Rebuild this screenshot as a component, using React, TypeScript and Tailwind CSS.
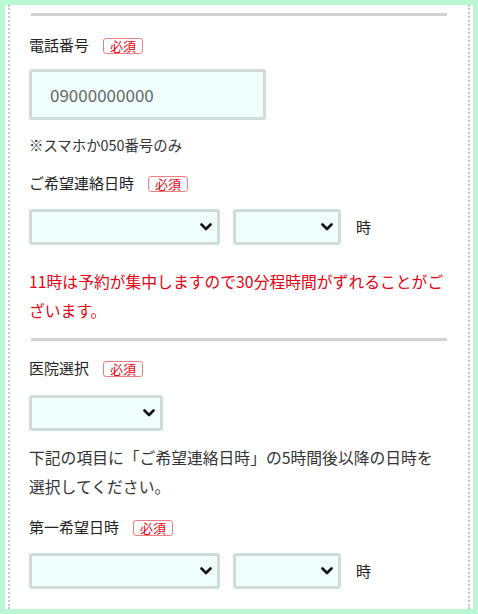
import React from "react";

const font = { fontFamily: '"Noto Sans CJK JP", "Noto Sans", sans-serif' };

function Chevron() {
  return (
    <svg width="12" height="8" viewBox="0 0 12 8" className="block">
      <path d="M1.5 1.5 L6 6 L10.5 1.5" fill="none" stroke="#111" strokeWidth="2.6" strokeLinecap="round" strokeLinejoin="round" />
    </svg>
  );
}

function Select({ w }: { w: string }) {
  return (
    <div className={`${w} h-[36px] flex items-center justify-end pr-[5px] border-[3px] border-[#cfdcd7] bg-[#f0fffb] rounded-[3px]`}>
      <Chevron />
    </div>
  );
}

function Badge() {
  return (
    <span className="inline-flex items-center justify-center h-[16px] px-[6px] border border-[#f08080] rounded-[3px] text-[13px] leading-none text-[#e60012] bg-white">
      必須
    </span>
  );
}

function Label({ text }: { text: string }) {
  return (
    <div className="flex items-center text-[15px] leading-[20px] text-[#222]">
      <span>{text}</span>
      <span className="ml-[14px]">
        <Badge />
      </span>
    </div>
  );
}

function Line() {
  return <div className="h-[3px] bg-[#d2d2d2] mx-[21px]" />;
}

export default function App() {
  return (
    <div className="w-[478px] h-[614px] bg-[#b9f8d3] p-[5px] overflow-hidden" style={font}>
      <div className="h-[604px] bg-white px-[3px] overflow-hidden">
        <div className="h-full border-l-2 border-r-2 border-dotted border-[#c8c8c8] pt-[8px]">
          <Line />
          <div className="px-[19px]">
            <div className="mt-[19px]">
              <Label text="電話番号" />
            </div>
            <div className="mt-[14px] w-[237px] h-[51px] border-[3px] border-[#cfdcd7] bg-[#f0fffb] rounded-[3px] flex items-center pl-[18px] text-[17px] text-[#666]">
              09000000000
            </div>
            <div className="mt-[15px] text-[14.4px] leading-[20px] text-[#333]">※スマホか050番号のみ</div>
            <div className="mt-[18px]">
              <Label text="ご希望連絡日時" />
            </div>
            <div className="mt-[16px] flex items-center">
              <Select w="w-[191px]" />
              <div className="ml-[13px]">
                <Select w="w-[108px]" />
              </div>
              <span className="ml-[15px] text-[15px] text-[#222]">時</span>
            </div>
            <div className="mt-[22px] text-[15.8px] leading-[29px] text-[#e60012] whitespace-nowrap">
              11時は予約が集中しますので30分程時間がずれることがご
              <br />
              ざいます。
            </div>
          </div>
          <div className="mt-[13px]">
            <Line />
          </div>
          <div className="px-[19px]">
            <div className="mt-[17px]">
              <Label text="医院選択" />
            </div>
            <div className="mt-[17px]">
              <Select w="w-[134px]" />
            </div>
            <div className="mt-[12px] text-[15.8px] leading-[29px] text-[#333] whitespace-nowrap">
              下記の項目に「ご希望連絡日時」の5時間後以降の日時を
              <br />
              選択してください。
            </div>
            <div className="mt-[16px]">
              <Label text="第一希望日時" />
            </div>
            <div className="mt-[16px] flex items-center">
              <Select w="w-[191px]" />
              <div className="ml-[13px]">
                <Select w="w-[108px]" />
              </div>
              <span className="ml-[15px] text-[15px] text-[#222]">時</span>
            </div>
          </div>
        </div>
      </div>
    </div>
  );
}
